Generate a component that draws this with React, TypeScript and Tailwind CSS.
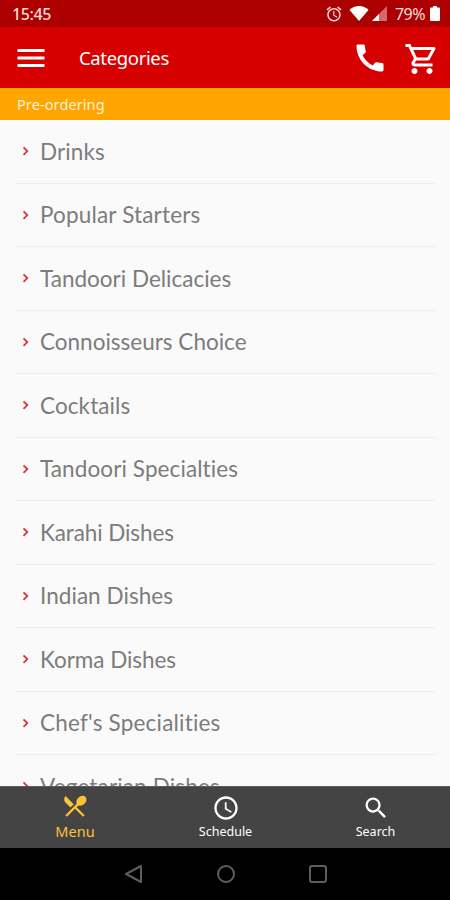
import {
  MdAccessAlarm,
  MdCall,
  MdMenu,
  MdOutlineShoppingCart,
  MdRestaurantMenu,
  MdSchedule,
  MdSearch,
} from "react-icons/md";

const categories = [
  { name: "Drinks", spacing: "tracking-[0.1px]" },
  { name: "Popular Starters", spacing: "tracking-[0.17px]" },
  { name: "Tandoori Delicacies", spacing: "tracking-[0px]" },
  { name: "Connoisseurs Choice", spacing: "tracking-[0px]" },
  { name: "Cocktails", spacing: "tracking-[0.1px]" },
  { name: "Tandoori Specialties", spacing: "tracking-[0.1px]" },
  { name: "Karahi Dishes", spacing: "tracking-[-0.1px]" },
  { name: "Indian Dishes", spacing: "tracking-[0.05px]" },
  { name: "Korma Dishes", spacing: "tracking-[-0.05px]" },
  { name: "Chef's Specialities", spacing: "tracking-[0.2px]" },
  { name: "Vegetarian Dishes", spacing: "tracking-[0.15px]" },
];

function StatusBar() {
  return (
    <div className="flex h-[27px] shrink-0 items-center justify-between bg-[#ac0000] pr-[10px] pl-[12px] text-[#f6dcdc]">
      <span className="text-[16px] leading-none font-medium tracking-[-0.4px]">15:45</span>
      <div className="flex items-center">
        <MdAccessAlarm className="mr-[6px] size-[18px]" />
        <svg className="mr-[3px] h-[15px] w-[20px]" viewBox="0 0 20 15" fill="#fff">
          <path d="M10 15 0.5 4C3 1.5 6.300 0 10 0s7 1.500 9.500 4z" />
        </svg>
        <svg className="mr-[8px] h-[15px] w-[15px]" viewBox="0 0 15 15">
          <path d="M0 15 15 0v15z" fill="#d46a6a" />
          <path d="M0 15 7 8v7z" fill="#fff" />
        </svg>
        <span className="mr-[5px] text-[16px] leading-none tracking-[-0.5px]">79%</span>
        <svg className="h-[15px] w-[10px]" viewBox="0 0 10 15" fill="#fff">
          <path d="M3 0h4v1.500h2a1 1 0 0 1 1 1V14a1 1 0 0 1-1 1H1a1 1 0 0 1-1-1V2.500a1 1 0 0 1 1-1h2z" />
        </svg>
      </div>
    </div>
  );
}

function Header() {
  return (
    <header className="flex h-[61px] shrink-0 items-center bg-[#d60000] pr-[10px] pl-[13px] text-white">
      <MdMenu className="size-9" />
      <h1 className="mt-px ml-[30px] flex-1 text-[18.5px] leading-none tracking-[-0.35px]">Categories</h1>
      <MdCall className="mr-[16px] size-9" />
      <MdOutlineShoppingCart className="mt-[3px] size-9" />
    </header>
  );
}

function BottomTabs() {
  return (
    <nav className="grid h-[62px] shrink-0 grid-cols-3 border-t border-[#5c5c5c] bg-[#444444] text-white">
      <div className="flex flex-col items-center pt-[5px] text-[#fbc337]">
        <MdRestaurantMenu className="size-[28px]" />
        <span className="mt-[3px] text-[14.5px] leading-[16px]">Menu</span>
      </div>
      <div className="flex flex-col items-center pt-[7px] pl-px">
        <MdSchedule className="size-[28px]" />
        <span className="mt-[2px] text-[12.5px] leading-[16px]">Schedule</span>
      </div>
      <div className="flex flex-col items-center pt-[7px] pl-px">
        <MdSearch className="size-[28px]" />
        <span className="mt-[2px] text-[12.5px] leading-[16px]">Search</span>
      </div>
    </nav>
  );
}

function SystemBar() {
  return (
    <div className="flex h-[52px] shrink-0 items-center justify-center gap-[72px] bg-black pl-px">
      <svg className="size-5" viewBox="0 0 20 20" fill="none" stroke="#5e5e5e" strokeWidth="2" strokeLinejoin="round">
        <path d="M17 2v16L2 10z" />
      </svg>
      <svg className="size-5" viewBox="0 0 20 20" fill="none" stroke="#5e5e5e" strokeWidth="2">
        <circle cx="10" cy="10" r="8" />
      </svg>
      <svg className="size-5" viewBox="0 0 20 20" fill="none" stroke="#5e5e5e" strokeWidth="2">
        <rect x="2" y="2" width="16" height="16" rx="2" />
      </svg>
    </div>
  );
}

export default function App() {
  return (
    <div className="flex h-[900px] w-[450px] flex-col overflow-hidden bg-[#fafafa] font-['Noto_Sans',sans-serif]">
      <StatusBar />
      <Header />
      <div className="flex h-[32px] shrink-0 items-center bg-[#ffa500] pt-px pl-[17px] text-[14.5px] tracking-[0.1px] text-[#fff3d6]">
        Pre-ordering
      </div>
      <ul className="min-h-0 flex-1 overflow-hidden pr-[14px] pl-[16px] font-['Lato','Noto_Sans',sans-serif]">
        {categories.map(({ name, spacing }) => (
          <li key={name} className="flex h-[63.5px] items-center border-b border-[#eeeeee]">
            <svg className="size-[18px]" viewBox="0 0 18 18" fill="none" stroke="#d93338" strokeWidth="1.8">
              <path d="M7.500 5.300 11.300 9.100 7.500 12.900" />
            </svg>
            <span className={`mt-px ml-[6px] text-[22.5px] leading-none whitespace-nowrap text-[#7c7c7c] ${spacing}`}>
              {name}
            </span>
          </li>
        ))}
      </ul>
      <BottomTabs />
      <SystemBar />
    </div>
  );
}
